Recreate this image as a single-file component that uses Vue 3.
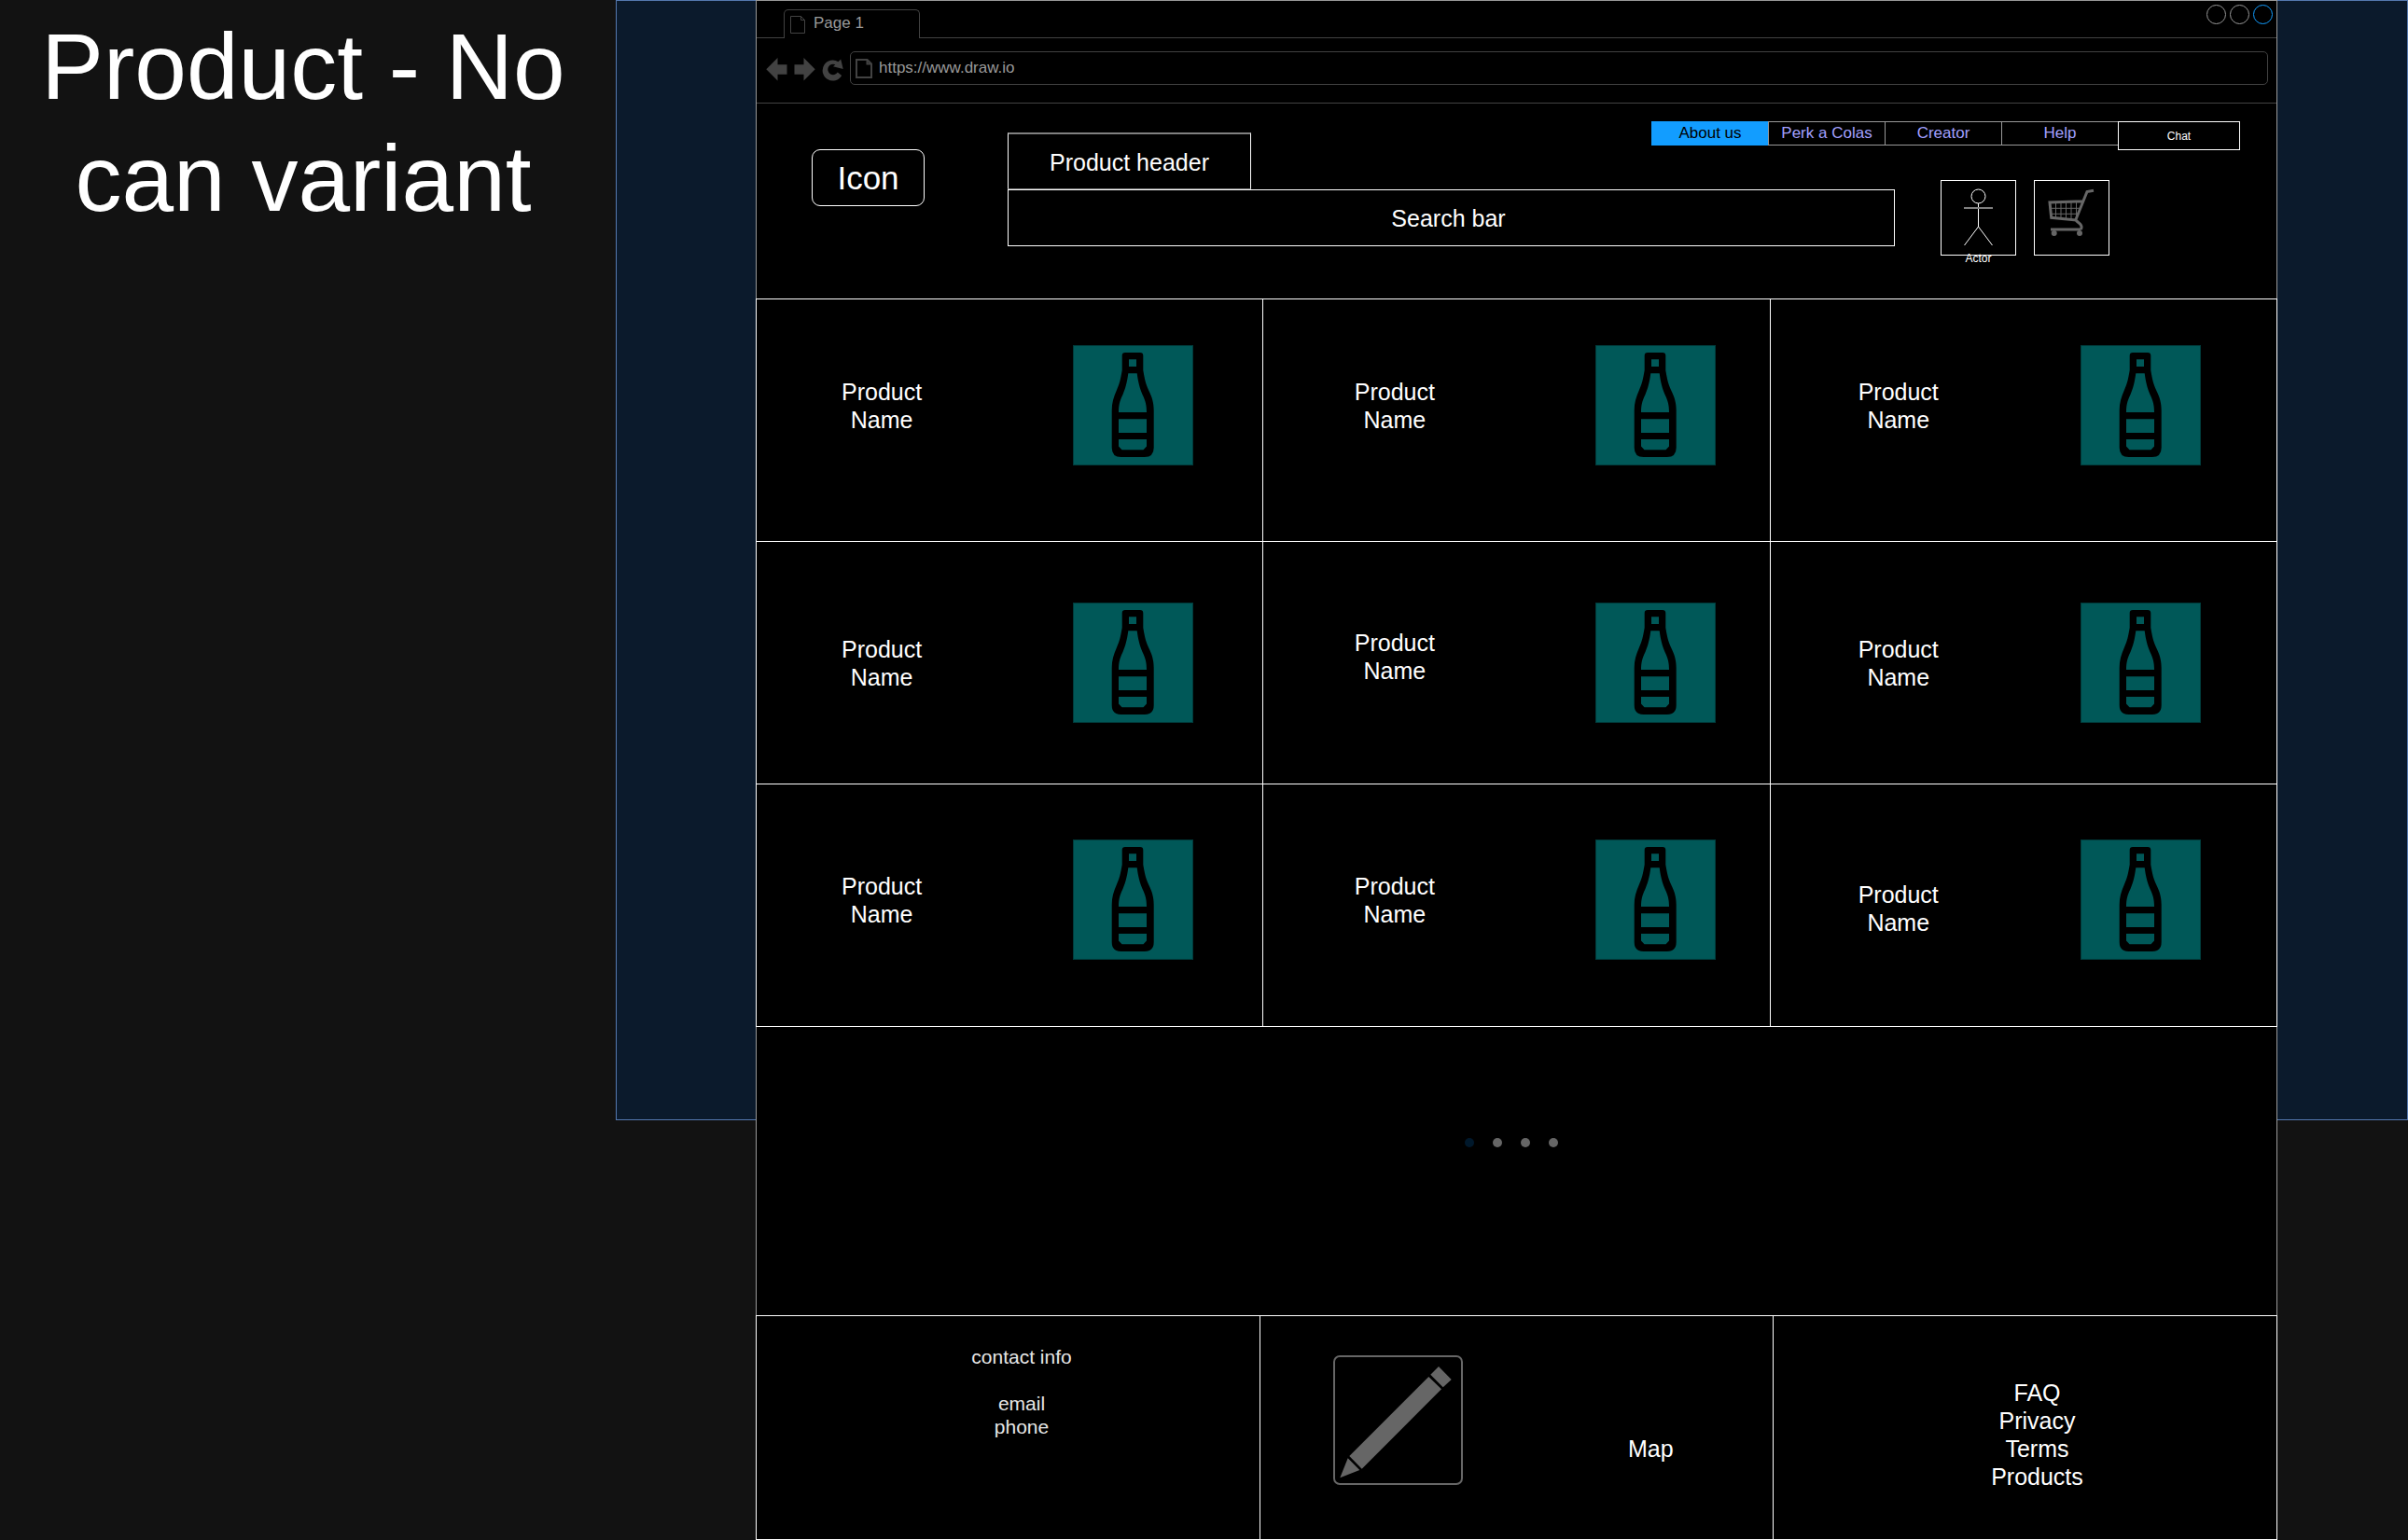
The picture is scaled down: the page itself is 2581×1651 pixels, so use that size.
<script setup>
import { ref } from 'vue'

const address = ref('https://www.draw.io')
const query = ref('')
const currentPage = ref(0)

const links = ['About us', 'Perk a Colas', 'Creator', 'Help']
const footerLinks = ['FAQ', 'Privacy', 'Terms', 'Products']

const rows = [
  { row: 'top', names: ['', '', ''] },
  { row: 'middle', names: ['', 'raised', ''] },
  { row: 'bottom', names: ['', '', 'lowered'] },
]
const columns = ['first', 'second', 'third']
</script>

<template>
  <div class="page">
    <h1 class="title">Product - No can variant</h1>
    <div class="backdrop"></div>

    <main class="window">
      <div class="chrome">
        <div class="tab-strip">
          <div class="tab">
            <svg class="tab-doc" viewBox="0 0 17 20" aria-hidden="true">
              <path d="M.5 1.5H11.5L15.5 5.5V19.5H.5ZM11.5 1.5V5.5H15.5" />
            </svg>
            <span>Page 1</span>
          </div>
          <div class="controls">
            <button type="button" aria-label="Minimize"></button>
            <button type="button" aria-label="Maximize"></button>
            <button type="button" class="close" aria-label="Close"></button>
          </div>
        </div>
        <div class="toolbar">
          <button type="button" aria-label="Back">
            <svg viewBox="0 0 23 25"><path d="M.3 12.3 12.5 0V7.3H22.5V17.7H12.5V24.6Z" /></svg>
          </button>
          <button type="button" aria-label="Forward">
            <svg viewBox="0 0 23 25"><path d="M22.7 12.3 10.5 0V7.3H.5V17.7H10.5V24.6Z" /></svg>
          </button>
          <button type="button" aria-label="Reload">
            <svg viewBox="0 0 23 25">
              <path d="M17.5 4.2 20.2 1.6 22.7 12 12 9.2 14.4 7.3A5.7 5.7 0 1 0 16.8 15.6L21.2 19A11 11 0 1 1 17.5 4.2Z" />
            </svg>
          </button>
          <label class="address">
            <svg viewBox="0 0 18 21" aria-hidden="true">
              <path d="M1 1H12.5L17 5.5V20H1ZM12.5 1V5.5H17" />
            </svg>
            <input v-model="address" type="text" aria-label="Address" />
          </label>
        </div>
      </div>

      <header class="header">
        <div class="logo">Icon</div>
        <div class="header-main">
          <div class="header-top">
            <div class="product-header">Product header</div>
            <nav class="nav">
              <a v-for="(link, i) in links" :key="link" href="#" :class="{ active: i === 0 }">{{ link }}</a>
              <button type="button" class="chat">Chat</button>
            </nav>
          </div>
          <div class="header-bottom">
            <input v-model="query" class="search" type="text" placeholder="Search bar" aria-label="Search bar" />
            <button type="button" class="square">
              <svg viewBox="1 1 79 79" class="actor" aria-hidden="true">
                <circle cx="40.5" cy="17.5" r="7.5" />
                <path d="M40.5 25V50M40.5 50 25.5 70M40.5 50 55.5 70" />
                <path class="arms" d="M25 30H56" />
              </svg>
              <span class="caption">Actor</span>
            </button>
            <button type="button" class="square" aria-label="Cart">
              <svg viewBox="1 1 79 79" class="cart" aria-hidden="true">
                <path class="mesh" d="M23.5 23V41M29 23V41.5M34.5 23V42M40 23V42.5M45.5 23V43M17 30.3H50M18 36.3H47" />
                <path d="M64 11.3 57 12.5 44.7 43 18.7 40.3 17 24 52.5 22.8M44.7 43 49.5 47Q52.5 50.5 50 53M18 53H50" />
                <circle cx="21.7" cy="57" r="3" />
                <circle cx="49" cy="57" r="3" />
              </svg>
            </button>
          </div>
        </div>
      </header>

      <section class="products">
        <template v-for="line in rows" :key="line.row">
          <article v-for="(column, i) in columns" :key="column" class="product" :class="[line.row, column]">
            <p class="name" :class="line.names[i]">Product<br />Name</p>
            <svg class="bottle" viewBox="0 0 129 129" aria-hidden="true">
              <rect x=".5" y=".5" width="128" height="128" />
              <path
                fill-rule="evenodd"
                d="M56 8H72Q75.3 8 75.3 11.3V27C77 37 78 41 81 48C85 56 86.7 62 86.7 70V110Q86.7 120 76.7 120H51.7Q41.7 120 41.7 110V70C41.7 62 43.5 56 47 48C50 41 51 37 52.7 27V11.3Q52.7 8 56 8ZM60 15.3V23H68V15.3ZM59.3 30.3C58 40 56.5 46 53.5 53C50 60 49 65 49 72H79C79 65 78 60 74.5 53C71.5 46 70 40 68.7 30.3ZM49 79.3V94H79V79.3ZM49 101V108.5L52.5 112.2H75.5L79 108.5V101Z"
              />
            </svg>
          </article>
        </template>
      </section>

      <section class="pager">
        <button
          v-for="n in 4"
          :key="n"
          type="button"
          :class="{ current: currentPage === n - 1 }"
          :aria-label="`Page ${n}`"
          @click="currentPage = n - 1"
        ></button>
      </section>

      <footer class="footer">
        <address class="contact">
          <p>contact info</p>
          <p>email<br />phone</p>
        </address>
        <div class="map">
          <svg viewBox="0 0 139 139" aria-hidden="true">
            <rect x="1" y="1" width="137" height="137" rx="6" />
            <path d="M113 12 126.7 26 117.7 34.3 104.3 20.7ZM102.3 23 116 36.3 30.7 121.7 17.3 108ZM15.7 110.3 28.3 123 7.3 131.3Z" />
          </svg>
          <span>Map</span>
        </div>
        <div class="links">
          <a v-for="link in footerLinks" :key="link" href="#">{{ link }}</a>
        </div>
      </footer>
    </main>
  </div>
</template>

<style>
body {
  margin: 0;
  background: #121212;
}
</style>

<style scoped>
.page {
  display: grid;
  grid-template-columns: 660fr 150fr 1631fr 140fr;
  grid-template-rows: 1201px auto;
  color: #fff;
  font: 25px/30px "Liberation Sans", Arial, sans-serif;
}

.page * {
  box-sizing: border-box;
}

button,
input {
  margin: 0;
  padding: 0;
  border: 0;
  background: none;
  color: inherit;
  font: inherit;
}

a {
  color: inherit;
  text-decoration: none;
}

p {
  margin: 0;
}

svg {
  display: block;
  flex: none;
}

.title {
  grid-area: 1 / 1;
  margin: 0;
  padding: 11px 10px 0 0;
  font-size: 100px;
  font-weight: 400;
  line-height: 120px;
  text-align: center;
}

.backdrop {
  grid-area: 1 / 2 / 2 / 5;
  border: 1px solid #5578af;
  background: #0b1a2c;
}

.window {
  grid-area: 1 / 3 / 3 / 4;
  background: #000;
}

.chrome {
  border: 1px solid #999;
  border-bottom: 0;
  color: #999;
  font-size: 17px;
  line-height: 20px;
}

.tab-strip {
  display: flex;
  justify-content: space-between;
  align-items: flex-start;
  height: 40px;
  padding: 0 4px 0 29px;
  border-bottom: 1px solid #424242;
}

.tab {
  display: flex;
  gap: 8px;
  width: 146px;
  height: 31px;
  margin-top: 9px;
  padding: 4px 6px;
  border: 1px solid #424242;
  border-bottom: 0;
  border-radius: 5px 5px 0 0;
  background: #000;
}

.tab-doc {
  width: 17px;
  height: 20px;
  margin-top: 1px;
  fill: none;
  stroke: #424242;
}

.controls {
  display: flex;
  gap: 4px;
  padding-top: 4px;
}

.controls button {
  width: 21px;
  height: 21px;
  border: 1px solid #999;
  border-radius: 50%;
}

.controls .close {
  border-color: #129dff;
}

.toolbar {
  display: flex;
  gap: 7px;
  height: 70px;
  padding: 14px 9px 0 10px;
  border-bottom: 1px solid #424242;
}

.toolbar button {
  width: 23px;
  height: 25px;
  margin-top: 7px;
  fill: #424242;
}

.address {
  display: flex;
  flex: 1;
  gap: 7px;
  height: 36px;
  padding: 0 5px;
  border: 1px solid #424242;
  border-radius: 5px;
}

.address svg {
  width: 18px;
  height: 21px;
  margin-top: 7px;
  fill: none;
  stroke: #424242;
  stroke-width: 2;
}

.address input {
  flex: 1;
  height: 34px;
}

.header {
  display: flex;
  gap: 89px;
  height: 209px;
  padding: 19px 0 0 59px;
  border: solid #999;
  border-width: 0 1px;
}

.logo {
  width: 121px;
  height: 61px;
  margin-top: 30px;
  border: 1px solid #fff;
  border-radius: 9px;
  font-size: 35px;
  line-height: 60px;
  text-align: center;
}

.header-main {
  flex: 1;
}

.header-top {
  display: flex;
  justify-content: space-between;
  align-items: flex-start;
  padding-right: 39px;
}

.product-header {
  width: 261px;
  height: 61px;
  margin-top: 12px;
  border: 1px solid #fff;
  border-top: 2px solid #808080;
  border-bottom-color: #808080;
  line-height: 60px;
  text-align: center;
}

.nav {
  display: flex;
  align-items: flex-start;
}

.nav a {
  width: 125px;
  height: 26px;
  border: 1px solid #999;
  border-right: 0;
  color: #a3a0ff;
  font-size: 17px;
  line-height: 24px;
  text-align: center;
}

.nav .active {
  border-color: #129dff;
  background: #129dff;
  color: #000;
}

.chat {
  width: 131px;
  height: 31px;
  border: 1px solid #fff;
  font-size: 12px;
}

.header-bottom {
  display: flex;
  gap: 19px;
  margin-top: -10px;
  padding-right: 179px;
}

.search {
  flex: 1;
  height: 61px;
  margin: 10px 30px 0 0;
  padding: 2px 6px 0 0;
  border: 1px solid #fff;
  text-align: center;
}

.search::placeholder {
  color: #fff;
  opacity: 1;
}

.square {
  position: relative;
  width: 81px;
  height: 81px;
  border: 1px solid #fff;
}

.actor {
  fill: none;
  stroke: #fff;
}

.actor .arms {
  stroke: #808080;
  stroke-width: 2;
}

.caption {
  position: absolute;
  top: 76px;
  left: 0;
  width: 100%;
  font-size: 12px;
  line-height: 14px;
}

.cart path {
  fill: none;
  stroke: #666;
  stroke-width: 3;
}

.cart .mesh {
  stroke-width: 1;
}

.cart circle {
  fill: #666;
}

.products {
  display: grid;
  grid-template-columns: repeat(3, 1fr);
  grid-auto-rows: 259px;
  gap: 1px;
  padding: 1px;
  background: #fff;
}

.product {
  display: flex;
  align-items: flex-start;
  background: #000;
}

.top {
  padding-top: 49px;
}

.middle {
  padding-top: 65px;
}

.bottom {
  padding-top: 59px;
}

.name {
  width: 50%;
  padding: 35px 0;
  text-align: center;
}

.raised {
  padding-top: 28px;
}

.lowered {
  padding-top: 44px;
}

.first .name {
  padding-right: 3px;
}

.second .name {
  padding-left: 10px;
}

.third .name {
  padding-left: 3px;
}

.bottle {
  width: 129px;
  height: 129px;
  margin-left: 68px;
}

.second .bottle {
  margin-left: 85px;
}

.third .bottle {
  margin-left: 61px;
}

.bottle rect {
  fill: #005858;
  stroke: #003b3b;
}

.pager {
  display: flex;
  justify-content: center;
  gap: 20px;
  height: 309px;
  padding: 119px 11px 0 0;
  border: solid #999;
  border-width: 0 1px;
}

.pager button {
  width: 10px;
  height: 10px;
  border-radius: 50%;
  background: #666;
}

.pager .current {
  background: #00182b;
}

.footer {
  display: grid;
  grid-template-columns: 539fr 549fr 539fr;
  grid-auto-rows: 239px;
  gap: 1px;
  padding: 1px;
  background: #fff;
}

.footer > * {
  background: #000;
}

.contact {
  padding: 31px 0 0 29px;
  color: #e6e6e6;
  font-size: 21px;
  font-style: normal;
  line-height: 25px;
  text-align: center;
}

.contact p + p {
  margin-top: 25px;
}

.map {
  display: flex;
  gap: 177px;
  padding: 42px 0 0 78px;
}

.map svg {
  width: 139px;
  height: 139px;
  fill: #666;
}

.map rect {
  fill: none;
  stroke: #666;
  stroke-width: 2;
}

.map span {
  margin-top: 85px;
}

.links {
  display: flex;
  flex-direction: column;
  align-items: center;
  padding: 67px 0 0 26px;
}
</style>
